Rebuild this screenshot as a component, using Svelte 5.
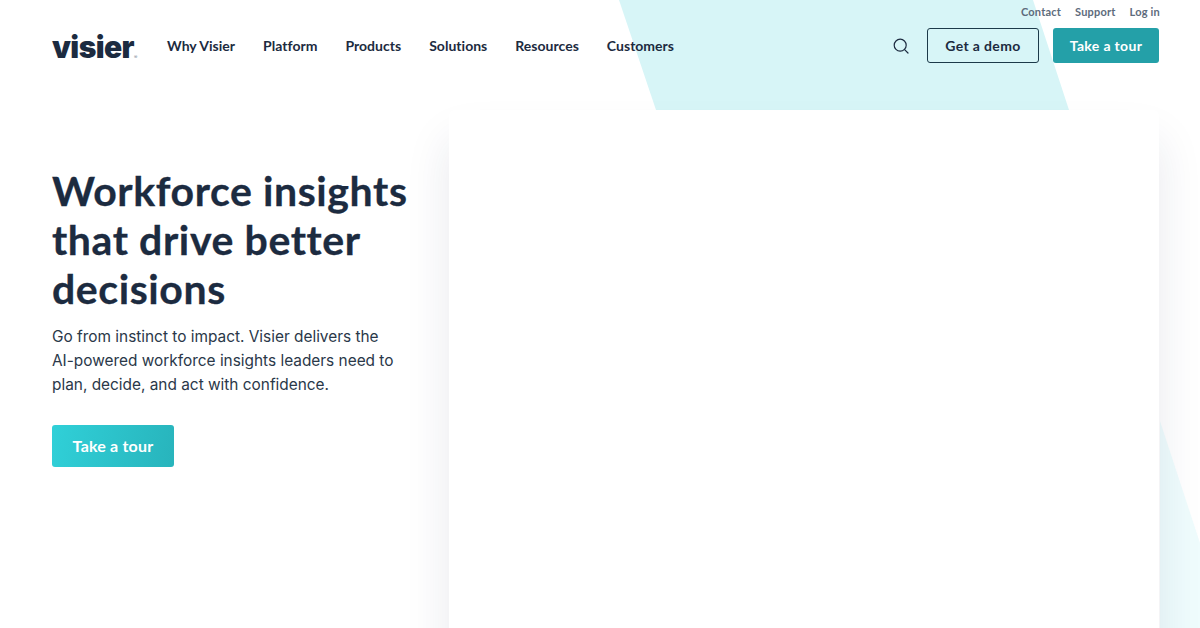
<script>
  const nav = ['Why Visier', 'Platform', 'Products', 'Solutions', 'Resources', 'Customers'];
  const util = ['Contact', 'Support', 'Log in'];
</script>

<div class="page">
  <svg class="shapes" width="1200" height="628" viewBox="0 0 1200 628" aria-hidden="true">
    <polygon points="619,0 1033,0 1069,110 656,110" fill="#d7f5f7" />
    <polygon points="1160,421 1200,543 1200,628 1160,628" fill="#effcfd" />
  </svg>

  <header class="header">
    <nav class="util">
      {#each util as item}
        <span>{item}</span>
      {/each}
    </nav>
    <div class="main-row">
      <div class="logo">visier<sup>®</sup></div>
      <nav class="nav">
        {#each nav as item}
          <span>{item}</span>
        {/each}
      </nav>
      <div class="actions">
        <svg class="search" width="16" height="16" viewBox="0 0 16 16" fill="none" stroke="#1c2b40" stroke-width="1.2" stroke-linecap="round">
          <circle cx="7.2" cy="7.2" r="6" />
          <path d="M11.6 11.6 15 15" />
        </svg>
        <span class="btn outline">Get a demo</span>
        <span class="btn solid">Take a tour</span>
      </div>
    </div>
  </header>

  <main class="hero">
    <section class="copy">
      <h1>Workforce insights that drive better decisions</h1>
      <p>Go from instinct to impact. Visier delivers the AI-powered workforce insights leaders need to plan, decide, and act with confidence.</p>
      <span class="cta">Take a tour</span>
    </section>
    <div class="card"></div>
  </main>
</div>

<style>
  :global(body) {
    margin: 0;
    background: #fff;
  }
  .page {
    position: relative;
    width: 1200px;
    height: 628px;
    overflow: hidden;
    color: #1c2b40;
    font-family: Lato, "Noto Sans", sans-serif;
  }
  .shapes {
    position: absolute;
    inset: 0;
  }
  .header {
    position: relative;
    height: 110px;
    padding: 0 41px 0 52px;
    box-sizing: border-box;
  }
  .util {
    display: flex;
    justify-content: flex-end;
    gap: 14px;
    height: 28px;
    padding: 4px 0 0;
    margin-right: -1px;
    box-sizing: border-box;
    font-size: 11px;
    line-height: 15px;
    font-weight: 700;
    letter-spacing: 0.2px;
    color: #5d6b7c;
  }
  .main-row {
    display: flex;
    align-items: center;
    height: 35px;
  }
  .logo {
    width: 115px;
    height: 35px;
    font-family: Inter, "Liberation Sans", sans-serif;
    font-weight: 900;
    font-size: 30px;
    line-height: 35px;
    letter-spacing: -0.6px;
    color: #1c2b40;
    padding-top: 2px;
    box-sizing: border-box;
  }
  .logo sup {
    font-size: 5px;
    letter-spacing: 0;
    color: #7b8796;
    vertical-align: -1px;
    font-weight: 400;
  }
  .nav {
    display: flex;
    gap: 28px;
    margin-top: -1px;
    font-size: 14px;
    font-weight: 700;
    letter-spacing: 0.02px;
  }
  .actions {
    margin-left: auto;
    display: flex;
    align-items: center;
  }
  .search {
    margin-right: 18px;
  }
  .btn {
    display: flex;
    align-items: center;
    justify-content: center;
    box-sizing: border-box;
    height: 35px;
    border-radius: 3px;
    font-size: 14px;
    font-weight: 700;
    letter-spacing: 0.35px;
  }
  .outline {
    width: 112px;
    border: 1px solid #1c3a4a;
    margin-right: 14px;
  }
  .solid {
    width: 106px;
    background: #24a0a8;
    color: #fff;
  }
  .hero {
    position: relative;
    display: flex;
    padding-left: 52px;
  }
  .copy {
    width: 397px;
    flex: none;
    padding-top: 56px;
    box-sizing: border-box;
  }
  h1 {
    margin: 0;
    width: 375px;
    font-size: 41px;
    line-height: 49px;
    font-weight: 700;
    letter-spacing: 0.6px;
    color: #1c2b40;
    -webkit-text-stroke: 0.3px #1c2b40;
  }
  p {
    margin: 12px 0 0;
    width: 350px;
    font-family: Inter, Roboto, sans-serif;
    font-size: 15.4px;
    line-height: 24px;
    color: #2a3849;
  }
  .cta {
    display: flex;
    align-items: center;
    justify-content: center;
    width: 122px;
    height: 42px;
    padding-bottom: 2px;
    box-sizing: border-box;
    margin-top: 28px;
    border-radius: 3px;
    background: linear-gradient(100deg, #30d0d8, #28b4bc);
    color: #fff;
    font-size: 16px;
    font-weight: 700;
    letter-spacing: 0.2px;
  }
  .card {
    width: 710px;
    height: 560px;
    background: #fff;
    border-radius: 6px 6px 0 0;
    box-shadow: 0 30px 45px rgba(28, 43, 80, 0.1);
  }
</style>
